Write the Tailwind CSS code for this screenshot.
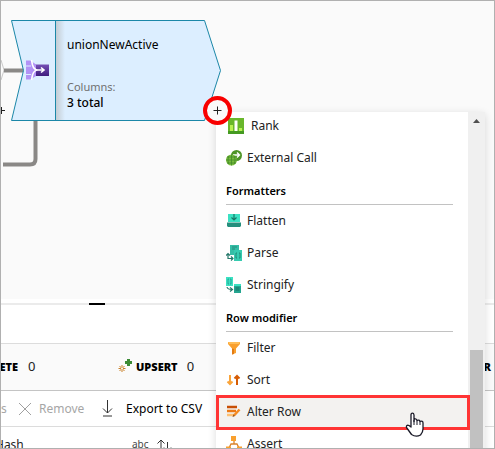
<!DOCTYPE html>
<html lang="en">
<head>
<meta charset="utf-8">
<title>Data flow</title>
<script src="https://cdn.jsdelivr.net/npm/@tailwindcss/browser@4"></script>
</head>
<body class="h-screen overflow-hidden bg-white font-['Noto_Sans','Open_Sans',sans-serif] text-xs text-[#222]">
<main class="relative flex h-screen flex-col overflow-hidden border border-[#b0b0b0] bg-white">

  <!-- Graph canvas -->
  <section class="relative h-[298px] shrink-0 bg-[#fafafa]" aria-label="Data flow graph">
    <svg class="absolute left-0 top-0" width="230" height="180" viewBox="1 1 230 180" fill="none" aria-hidden="true">
      <path d="M1 60 L4 70 L1 80" stroke="#c8c8c8"/>
      <path d="M4 70.500H24" stroke="#8a8886" stroke-width="4"/>
      <path d="M35.500 121V159Q35.500 164.500 30 164.500H3" stroke="#8a8886" stroke-width="4"/>
      <path d="M1 110.500H5M1.500 107V114" stroke="#222"/>
      <path d="M11.500 20.500H204.500L220.500 70.500L204.500 120.500H11.500L23.500 70.500Z" fill="#dceeff" stroke="#1b87a8"/>
      <defs>
        <linearGradient id="shade"><stop stop-color="#c4ccd3"/><stop offset="1" stop-color="#dceeff"/></linearGradient>
        <linearGradient id="union" x2="0" y2="1"><stop stop-color="#7650b5"/><stop offset="1" stop-color="#3f1c7d"/></linearGradient>
      </defs>
      <path d="M56 21H65V120H56Z" fill="url(#shade)"/>
      <path d="M55.500 21V120" stroke="#1b87a8"/>
      <path d="M35 64.500H49V76H35Z" fill="url(#union)"/>
      <path d="M26 60.500H30.500L36 64.500V76L30.500 79.500H26Z" fill="#b292f5"/>
      <path d="M25 66H31M25 74.500H31" stroke="#dceeff"/>
      <path d="M31.500 60L32.500 65Q34 70 38 70H43M31.500 80L32.500 75Q34 70 38 70M41 67.500L44 70L41 72.500" stroke="#fff" stroke-width="1.600"/>
    </svg>
    <div class="absolute left-[66px] top-9 flex flex-col">
      <strong class="text-xs leading-4 font-normal text-black">unionNewActive</strong>
      <span class="mt-[26px] text-[11px] leading-4 text-[#707070]">Columns:</span>
      <span class="text-xs leading-4 font-medium text-black">3 total</span>
    </div>
  </section>

  <!-- Panel resize handle -->
  <div class="flex h-[6px] shrink-0 items-end bg-white">
    <div class="h-[2px] w-full bg-[#ebebeb]"><div class="ml-22 h-[2px] w-4 bg-black"></div></div>
  </div>
  <div class="h-[38px] shrink-0"></div>

  <!-- Row counters -->
  <section class="relative flex h-[48px] shrink-0 items-center border-y border-t-[#dcdcdc] border-b-[#c4c4c4] bg-[#fafafa]">
    <div class="flex w-[117px] items-center gap-[10px]">
      <b class="flex w-[17px] justify-end text-[11px] font-black text-black">DELETE</b>
      <span class="text-[13px]">0</span>
    </div>
    <div class="flex items-center">
      <svg width="16" height="16" viewBox="0 0 16 16" aria-hidden="true"><path d="M10.500 0V7M7 3.500H14" stroke="#3c8b35" stroke-width="3"/><path d="M4 6V13M.5 9.500H7.500M1.500 7L6.500 12M6.500 7L1.500 12" stroke="#c98028"/><circle cx="4" cy="9.500" r="1" fill="#fff"/></svg>
      <b class="ml-[2px] text-[11px] font-black text-black">UPSERT</b>
      <span class="ml-[9px] text-[13px]">0</span>
    </div>
    <b class="absolute right-[3px] text-[11px] font-black text-black">R</b>
  </section>

  <!-- Table toolbar -->
  <section class="relative flex h-9 shrink-0 items-center border-b border-[#dcdcdc]">
    <span class="w-[17px] text-[#a6a6a6]">s</span>
    <button type="button" disabled class="flex w-[84px] items-center gap-[7px] text-[#a6a6a6]">
      <svg class="shrink-0" width="14" height="14" viewBox="0 0 14 14" fill="none" stroke="#a0a0a0" aria-hidden="true"><path d="M1 1L13 13M13 1L1 13"/></svg>Remove
    </button>
    <button type="button" class="flex items-center gap-[13px] text-black">
      <svg class="shrink-0" width="11" height="17" viewBox="0 0 11 17" fill="none" stroke="#333" aria-hidden="true"><path d="M5.500 0V13M1 8.500L5.500 13L10 8.500M1 16H10"/></svg><span class="whitespace-nowrap">Export to CSV</span>
    </button>
  </section>

  <!-- Column headings -->
  <section class="flex h-9 shrink-0 items-center">
    <span class="w-[131px]"><span class="-ml-[6px]">Hash</span></span>
    <span class="w-6 text-[10px] text-[#444]">abc</span>
    <svg width="16" height="13" viewBox="0 0 16 13" fill="none" stroke="#333" aria-hidden="true"><path d="M5 10V1M1.500 4.500L5 1L8.500 4.500M11.500 3V12M8 8.500L11.500 12L15 8.500"/></svg>
  </section>

  <!-- Transformation menu -->
  <nav class="absolute -bottom-5 left-[215px] top-[111px] flex w-[269px] overflow-hidden bg-white shadow-[0_2px_8px_rgba(0,0,0,0.14)]" aria-label="Add transformation">
    <div class="-mt-[2px] flex min-w-0 flex-1 flex-col">
      <button type="button" class="flex h-8 shrink-0 items-center gap-[7px] px-3 text-left">
        <svg class="shrink-0" width="16" height="16" viewBox="0 0 16 16" aria-hidden="true"><path d="M0 0H16V16H0Z" fill="#69b72b"/><path d="M0 13H16V16H0Z" fill="#459a22"/><path d="M2 7H5V13H2ZM11 10H14V13H11Z" fill="#b8f252"/><path d="M6.500 2.500H9.500V13H6.500Z" fill="#fff"/></svg>Rank
      </button>
      <button type="button" class="flex h-8 shrink-0 items-center gap-[5px] px-[10px] text-left">
        <svg class="shrink-0" width="16" height="16" viewBox="0 0 16 16" fill="none" aria-hidden="true"><circle cx="10.500" cy="5.500" r="5.500" fill="#4d9426"/><path d="M7 5H13M11 2.500L13.500 5L11 7.500" stroke="#fff" stroke-width="1.400"/><circle cx="5.500" cy="10" r="5.500" fill="#78bb3c"/><path d="M5.500 4.500V15.500M0 10H11M1 7H10M1 13H10M2.500 6Q1.500 10 2.500 14M8.500 6Q9.500 10 8.500 14" stroke="#438a28" stroke-width=".8"/></svg>External Call
      </button>
      <h2 class="ml-[10px] mr-[15px] flex h-[31px] shrink-0 items-center border-b border-[#c2c2c2] pt-1 text-[11px] font-semibold text-black">Formatters</h2>
      <button type="button" class="flex h-8 shrink-0 items-center gap-[5px] px-[10px] text-left">
        <svg class="shrink-0" width="16" height="16" viewBox="0 0 16 16" fill="none" aria-hidden="true"><path d="M2 1H14V9H2Z" fill="#3be1c2"/><path d="M1 9.500H15V13L14 14H2L1 13Z" fill="#258f7d"/><path d="M8 1V7M5.500 4.500L8 7L10.500 4.500" stroke="#177766" stroke-width="1.200"/></svg>Flatten
      </button>
      <button type="button" class="flex h-8 shrink-0 items-center gap-[5px] px-[10px] text-left">
        <svg class="shrink-0" width="16" height="16" viewBox="0 0 16 16" fill="none" aria-hidden="true"><path d="M4 0H13V10H4Z" fill="#35bda6"/><path d="M6 2H11M6 4H9" stroke="#238b7b"/><path d="M8 5H16V16H8Z" fill="#36cbb0"/><path d="M11 8H10V13H11M13 8H14V13H13" stroke="#208b78"/><path d="M7 13.500H2V9M0 10.500L2 8.500L4 10.500M5 11.500L7 13.500L5 15.500" stroke="#25786a" stroke-width="1.200"/></svg>Parse
      </button>
      <button type="button" class="flex h-8 shrink-0 items-center gap-[5px] px-[10px] text-left">
        <svg class="shrink-0" width="16" height="16" viewBox="0 0 16 16" fill="none" aria-hidden="true"><path d="M0 0H7V9H0Z" fill="#3be1c2"/><path d="M3 2H2V7H3M4 2H5V7H4" stroke="#20998a" stroke-width=".8"/><path d="M8 7H15V16H8Z" fill="#25a590"/><path d="M8 7H15V9H8Z" fill="#3be1c2"/><path d="M9.500 11H13.500M9.500 13H13.500" stroke="#156e60"/><path d="M1 10Q1.500 12.500 6 12.500M4 10.500L6.500 12.500L4 14.500" stroke="#25786a" stroke-width="1.200"/></svg>Stringify
      </button>
      <h2 class="ml-[10px] mr-[15px] flex h-[31px] shrink-0 items-center border-b border-[#c2c2c2] pt-1 text-[11px] font-semibold text-black">Row modifier</h2>
      <button type="button" class="flex h-8 shrink-0 items-center gap-[5px] px-[10px] text-left">
        <svg class="shrink-0" width="16" height="16" viewBox="0 0 16 16" aria-hidden="true"><path d="M2 2H14V4L10 8.500V13L6 14.500V8.500L2 4Z" fill="#f9a02e"/><path d="M2 2H14L13 4H3Z" fill="#ffbd58"/><path d="M6 8.500L8 9V14L6 14.500Z" fill="#e27b13"/></svg>Filter
      </button>
      <button type="button" class="flex h-8 shrink-0 items-center gap-[5px] px-[10px] text-left">
        <svg class="shrink-0" width="16" height="16" viewBox="0 0 16 16" fill="none" aria-hidden="true"><path d="M4 3V12M1.500 9.500L4 12L6.500 9.500" stroke="#faa43a" stroke-width="2"/><path d="M11 13V4M8.500 6.500L11 4L13.500 6.500" stroke="#d55c05" stroke-width="2"/></svg>Sort
      </button>
      <button type="button" class="relative z-10 flex h-8 shrink-0 items-center gap-[5px] bg-[#f3f2f0] px-[10px] text-left">
        <svg class="shrink-0" width="16" height="16" viewBox="0 0 16 16" fill="none" aria-hidden="true"><path d="M1 3H11" stroke="#c84f05" stroke-width="2.500"/><path d="M1 7H10" stroke="#ec7914" stroke-width="2.500"/><path d="M1 11H8" stroke="#ffc071" stroke-width="2.500"/><path d="M8 11.500L13.500 5.500" stroke="#f58a21" stroke-width="2.500"/><path d="M6.500 13L7.500 10.500L9 12Z" fill="#8a4a18"/></svg>Alter Row
        <span class="pointer-events-none absolute -bottom-[2px] -right-[2px] -top-px left-0 border-3 border-[#ff3434]"></span>
      </button>
      <button type="button" class="flex h-8 shrink-0 items-center gap-[5px] px-[10px] text-left">
        <svg class="shrink-0" width="16" height="16" viewBox="0 0 16 16" fill="none" aria-hidden="true"><path d="M8 5V8M3 12L5 8H11L13 12" stroke="#d9822b" stroke-width="1.300"/><path d="M5 0H10V5H5ZM0 10.500H5V15H0ZM11 10.500H16V15H11Z" fill="#f9a02e"/></svg>Assert
      </button>
    </div>
    <div class="flex w-[17px] shrink-0 flex-col items-center bg-[#f0f0f0] pt-[7px]" aria-hidden="true">
      <svg width="7" height="4" viewBox="0 0 7 4"><path d="M3.500 0L7 4H0Z" fill="#505050"/></svg>
      <div class="mt-[227px] w-[13px] flex-1 bg-[#c1c1c1]"></div>
    </div>
  </nav>

  <!-- Highlighted add button -->
  <button type="button" aria-label="Add transformation" class="absolute left-[202px] top-[95px] flex size-[29px] items-center justify-center rounded-full border-4 border-[#f80000] bg-[#fafafa]">
    <svg width="9" height="9" viewBox="0 0 9 9" stroke="#222" aria-hidden="true"><path d="M4.500 .5V8.500M.5 4.500H8.500"/></svg>
  </button>

  <!-- Pointer -->
  <svg class="pointer-events-none absolute left-[404px] top-[411px] z-20" width="20" height="26" viewBox="0 0 20 26" aria-hidden="true"><path d="M6 3Q6 1.200 7.400 1.200T9 3V9.500V7.500Q11.500 6 12 8.500Q14.500 7.200 15 9.500Q18 8.500 18 11V17Q18 20 15.500 23Q11 25.500 6.500 22.500L1.500 15.500Q1 12.500 4 13.500L6 15Z" fill="#fff" stroke="#1a1a28" stroke-width="1.300" stroke-linejoin="round"/><path d="M9 8V13M12 8.500V13M15 9.500V13" stroke="#1a1a28"/></svg>
</main>
</body>
</html>
